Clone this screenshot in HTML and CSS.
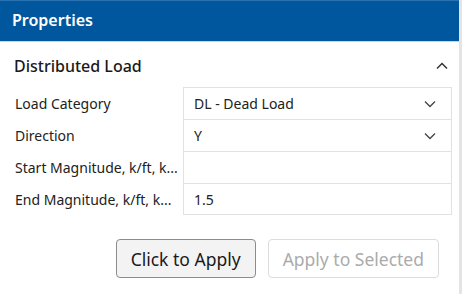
FILE: index.html
```html
<!DOCTYPE html>
<html lang="en">
<head>
    <meta charset="UTF-8">
    <title>Properties</title>
    <link rel="stylesheet" href="styles.css">
</head>
<body>
    <!-- Properties panel -->
    <div class="panel">
        <div class="panel-header">Properties</div>

        <div class="section">
            <div class="section-title">
                <span>Distributed Load</span>
                <svg class="caret" width="12" height="8" viewBox="0 0 12 8">
                    <path d="M1 6.5 L6 1.5 L11 6.5" fill="none" stroke="#333" stroke-width="1.5"/>
                </svg>
            </div>

            <div class="props">
                <div class="prop-label">Load Category</div>
                <div class="prop-value select">
                    <span>DL - Dead Load</span>
                    <svg width="12" height="8" viewBox="0 0 12 8">
                        <path d="M1 1.5 L6 6.5 L11 1.5" fill="none" stroke="#444" stroke-width="1.3"/>
                    </svg>
                </div>

                <div class="prop-label">Direction</div>
                <div class="prop-value select">
                    <span>Y</span>
                    <svg width="12" height="8" viewBox="0 0 12 8">
                        <path d="M1 1.5 L6 6.5 L11 1.5" fill="none" stroke="#444" stroke-width="1.3"/>
                    </svg>
                </div>

                <div class="prop-label">Start Magnitude, k/ft, k...</div>
                <div class="prop-value"></div>

                <div class="prop-label">End Magnitude, k/ft, k...</div>
                <div class="prop-value">1.5</div>
            </div>

            <div class="actions">
                <button class="btn">Click to Apply</button>
                <button class="btn btn-disabled" disabled>Apply to Selected</button>
            </div>
        </div>
    </div>
</body>
</html>
```

FILE: styles.css
```css
/* Properties panel */
html {
    font-family: "Noto Sans", "Open Sans", sans-serif;
}

body {
    margin: 0;
    padding: 0;
    background-color: #fff;
    color: #222;
}

.panel {
    width: 459px;
    height: 294px;
    border-right: 3px solid #e4e4e4;
    background-color: #fff;
}

.panel-header {
    height: 42px;
    box-sizing: border-box;
    background-color: #00579d;
    border-top: 1px solid #2a72b0;
    border-bottom: 1px solid #d0d0d0;
    color: white;
    font-size: 16px;
    font-weight: 600;
    padding-left: 12px;
    line-height: 38px;
}

.section {
    padding: 0 7px 0 14px;
}

.section-title {
    height: 45px;
    display: flex;
    align-items: center;
    justify-content: space-between;
    font-size: 16px;
    font-weight: 500;
    color: #1a1a1a;
    padding-top: 2px;
    box-sizing: border-box;
}

.caret {
    margin-right: 4px;
}

.props {
    display: grid;
    grid-template-columns: 169px 1fr;
    grid-auto-rows: 32px;
    font-size: 14px;
}

.prop-label {
    display: flex;
    align-items: center;
    padding-left: 1px;
    padding-top: 1px;
    white-space: nowrap;
    overflow: hidden;
}

.prop-value {
    display: flex;
    align-items: center;
    padding-left: 10px;
    border: 1px solid #e2e2e2;
    border-bottom: none;
}

.props .prop-value:last-child {
    border-bottom: 1px solid #e2e2e2;
}

.select {
    justify-content: space-between;
    padding-right: 15px;
}

.actions {
    display: flex;
    justify-content: flex-end;
    gap: 12px;
    margin-top: 24px;
    padding-right: 13px;
}

.btn {
    height: 39px;
    padding: 0 14px;
    font-family: inherit;
    font-size: 17.5px;
    background-color: #f3f3f3;
    color: #1a1a1a;
    border: 1px solid #8c8c8c;
    border-radius: 4px;
}

.btn-disabled {
    background-color: #fff;
    color: #ababab;
    border-color: #dcdcdc;
}
```
